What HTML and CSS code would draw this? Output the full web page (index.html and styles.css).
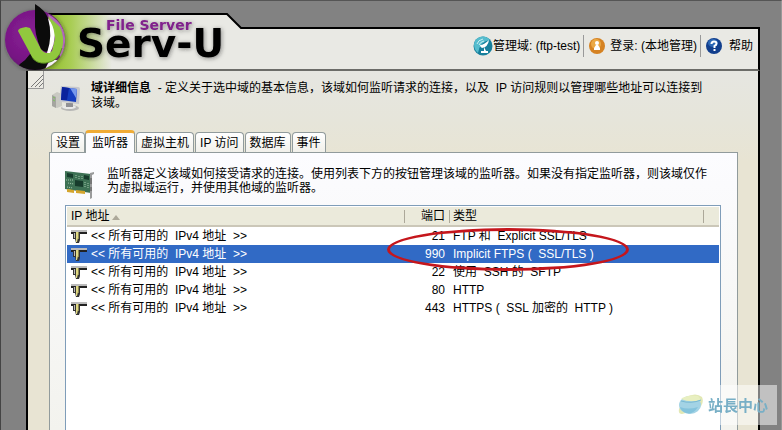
FILE: index.html
```html
<!DOCTYPE html>
<html lang="zh-CN">
<head>
    <meta charset="UTF-8">
    <meta name="viewport" content="width=device-width, initial-scale=1.0">
    <title>Serv-U File Server</title>
    <link rel="stylesheet" href="styles.css">
</head>
<body>
    <div class="page">
        <header class="header">
            <svg class="brand" width="242" height="69" viewBox="0 0 242 69" role="img" aria-label="Serv-U File Server">
                <defs>
                    <linearGradient id="bannerFill" x1="40" x2="108" y1="0" y2="0" gradientUnits="userSpaceOnUse">
                        <stop offset="0" stop-color="#8fbe22"/>
                        <stop offset="0.4" stop-color="#a9cd55"/>
                        <stop offset="1" stop-color="#e9e9e4"/>
                    </linearGradient>
                    <radialGradient id="ballFill" cx="0.4" cy="0.4" r="0.65">
                        <stop offset="0" stop-color="#8a1f96"/>
                        <stop offset="0.7" stop-color="#761683"/>
                        <stop offset="1" stop-color="#5a1066"/>
                    </radialGradient>
                    <filter id="soft" x="-10%" y="-10%" width="130%" height="140%">
                        <feDropShadow dx="1" dy="1" stdDeviation="2" flood-color="#222" flood-opacity="0.5"/>
                    </filter>
                    <clipPath id="ballClip"><circle cx="31" cy="38" r="30"/></clipPath>
                </defs>
                <path d="M23 12H223L237 26H242V69H23Z" fill="url(#bannerFill)"/>
                <path d="M40 12H223L237 26H242" fill="none" stroke="#000" stroke-width="2"/>
                <path d="M22 68H242" stroke="#6c6c68" stroke-width="2"/>
                <g filter="url(#soft)">
                    <circle cx="31" cy="38" r="30" fill="url(#ballFill)"/>
                    <path d="M44 12Q62 22 61 40Q60 50 56 55Z" fill="#b06bb8"/>
                    <g clip-path="url(#ballClip)">
                        <path d="M16 62Q22 58 26 52L44 60L40 70H10Z" fill="#0b0b0b"/>
                        <path d="M40 69L46 58L54 58L50 69Z" fill="#f4f4f4"/>
                    </g>
                </g>
                <path d="M44 14L56 25Q61 36 58 46Q55 59 42 61Q32 62 28 55L14 29Q14 26 22 25L26 26L37 47Q42 54 48 49L51 36Z" fill="#91c83e"/>
                <path d="M58 46Q55 59 42 61Q32 62 28 55" fill="none" stroke="#5d9220"/>
                <path d="M31 2Q41 8 44 16Q50 32 44 49Q41 51 37 47Q30 32 31 18Z" fill="#0b0b0b"/>
                <path d="M44 16Q56 32 46 51L43 51Q49 34 44 16Z" fill="#fff"/>
                <g filter="url(#soft)">
                    <text class="brand-sub" x="102" y="28">File Server</text>
                    <text class="brand-name" x="73" y="55">Serv-U</text>
                </g>
            </svg>
            <nav class="topnav">
                <a href="#domain" class="toplink">
                    <svg width="20" height="20" viewBox="0 0 20 20" aria-hidden="true">
                        <circle cx="10" cy="10" r="9.5" fill="#167f9c"/>
                        <path d="M1 8A9 9 0 0 1 17 4Q7 5 5 17Q1 14 1 8Z" fill="#55bccd"/>
                        <path d="M16 4Q15 11 9 12Q7 11 7 9Q11 9 16 4ZM11 11L13 15H15V17H8V15H11Z" fill="#fff"/>
                        <path d="M4 8Q5 4 10 3M6 9Q7 6 11 5" fill="none" stroke="#cceef3"/>
                    </svg>
                    <span>管理域: (ftp-test)</span>
                </a>
                <a href="#login" class="toplink">
                    <svg width="16" height="16" viewBox="0 0 16 16" aria-hidden="true">
                        <circle cx="8" cy="8" r="8" fill="#d58222"/>
                        <circle cx="7" cy="6" r="5" fill="#eba844"/>
                        <circle cx="8" cy="5" r="2" fill="#fff"/>
                        <path d="M5 12V10L7 7H9L11 10V12Z" fill="#fff"/>
                    </svg>
                    <span>登录: (本地管理)</span>
                </a>
                <a href="#help" class="toplink">
                    <svg width="16" height="16" viewBox="0 0 16 16" aria-hidden="true">
                        <circle cx="8" cy="8" r="8" fill="#123f8d"/>
                        <ellipse cx="7" cy="5" rx="5" ry="4" fill="#2c67b5"/>
                        <path d="M5.5 6Q5.500 3.500 8 3.500Q10.500 3.500 10.500 5.500Q10.500 7 8.500 8V10" fill="none" stroke="#fff" stroke-width="2"/>
                        <path d="M7.500 11H9.500V13H7.500Z" fill="#fff"/>
                    </svg>
                    <span>帮助</span>
                </a>
            </nav>
        </header>

        <main class="window">
            <svg class="grip" width="16" height="18" viewBox="0 0 16 18" aria-hidden="true">
                <path d="M0 0H16V18H0Z" fill="#ebeae3"/>
                <path d="M15.500 0V17.500H0" fill="none" stroke="#999"/>
                <path d="M3 16L15 4M7 16L15 8M11 16L15 12" stroke="#777"/>
            </svg>
            <section class="intro">
                <svg class="intro-icon" width="28" height="26" viewBox="0 0 28 26" aria-hidden="true">
                    <path d="M0 9L5 6L10 8V20L5 22L0 20Z" fill="#c9c9c2"/>
                    <path d="M0 9L4 11V22L0 20Z" fill="#a5a5a0"/>
                    <path d="M1 11L3 12M1 14L3 15" stroke="#7cc15c"/>
                    <ellipse cx="18" cy="22" rx="9" ry="3" fill="#b8b8b6"/>
                    <ellipse cx="17" cy="21" rx="7" ry="2" fill="#e9e9e8"/>
                    <path d="M14 17H21V21H14Z" fill="#909094"/>
                    <path d="M9 0L26 1Q28 1 28 3L27 18L9 16Q7 16 7 14Z" fill="#c6c7cc"/>
                    <path d="M10 1L25 3L24 16L9 14Z" fill="#153dbe"/>
                    <path d="M18 2L25 3L24 12Z" fill="#7698ed"/>
                    <path d="M10 1L17 2L15 14L9 14Z" fill="#0a229c"/>
                </svg>
                <p><strong>域详细信息</strong>&nbsp; - 定义关于选中域的基本信息，该域如何监听请求的连接，以及&nbsp; IP 访问规则以管理哪些地址可以连接到该域。</p>
            </section>
            <div class="tabs" role="tablist">
                <button class="tab" role="tab">设置</button>
                <button class="tab active" role="tab" aria-selected="true">监听器</button>
                <button class="tab" role="tab">虚拟主机</button>
                <button class="tab" role="tab">IP 访问</button>
                <button class="tab" role="tab">数据库</button>
                <button class="tab" role="tab">事件</button>
            </div>
            <section class="panel" role="tabpanel">
                <div class="note">
                    <svg class="note-icon" width="30" height="28" viewBox="0 0 30 28" aria-hidden="true">
                        <path d="M0 0L26 3V22L0 18Z" fill="#3d7154"/>
                        <path d="M2 2L8 3V7L2 6ZM10 9L18 10V16L10 15ZM19 4L24 5V9L19 8Z" fill="#173c2c"/>
                        <path d="M1 9H8M3 12L9 13M11 4V8M14 5V8M17 5V8M20 11V17M23 12V18M2 16L8 17" stroke="#a4c8ac" stroke-dasharray="1 1"/>
                        <path d="M2 18L9 19V22L2 21ZM11 19L20 20V23L11 22Z" fill="#d4a52c"/>
                        <path d="M25 2L29 1V3L27 4V27L25 28Z" fill="#9a9b9b"/>
                        <path d="M26 7V13M26 16V20" stroke="#555"/>
                    </svg>
                    <p>监听器定义该域如何接受请求的连接。使用列表下方的按钮管理该域的监听器。如果没有指定监听器，则该域仅作为虚拟域运行，并使用其他域的监听器。</p>
                </div>
                <svg width="0" height="0" class="symbols" aria-hidden="true">
                    <symbol id="listener" viewBox="0 0 16 14">
                        <path d="M0 0H16V2H0Z" fill="#bbb"/>
                        <path d="M0 2H16V4H0Z" fill="#222"/>
                        <path d="M2 3H9V10L8 13H5L4 9H2Z" fill="#333"/>
                        <path d="M3 3H4V8H3Z" fill="#bbb"/>
                        <path d="M5 2H7V8L6 12H5Z" fill="#e0d982"/>
                        <path d="M7 2H8V9H7Z" fill="#8c8650"/>
                    </symbol>
                </svg>
                <div class="list">
                    <table class="listeners">
                        <colgroup>
                            <col class="col-ip"><col class="col-port"><col class="col-type"><col class="col-end">
                        </colgroup>
                        <thead>
                            <tr><th>IP 地址<span class="sort"></span></th><th class="port">端口</th><th>类型</th><th></th></tr>
                        </thead>
                        <tbody>
                            <tr><td><svg class="row-icon"><use href="#listener"/></svg>&lt;&lt; 所有可用的&nbsp; IPv4 地址&nbsp; &gt;&gt;</td><td class="port">21</td><td colspan="2">FTP 和&nbsp; Explicit SSL/TLS</td></tr>
                            <tr class="selected"><td><svg class="row-icon"><use href="#listener"/></svg>&lt;&lt; 所有可用的&nbsp; IPv4 地址&nbsp; &gt;&gt;</td><td class="port">990</td><td colspan="2">Implicit FTPS ( &nbsp;SSL/TLS )</td></tr>
                            <tr><td><svg class="row-icon"><use href="#listener"/></svg>&lt;&lt; 所有可用的&nbsp; IPv4 地址&nbsp; &gt;&gt;</td><td class="port">22</td><td colspan="2">使用&nbsp; SSH 的&nbsp; SFTP</td></tr>
                            <tr><td><svg class="row-icon"><use href="#listener"/></svg>&lt;&lt; 所有可用的&nbsp; IPv4 地址&nbsp; &gt;&gt;</td><td class="port">80</td><td colspan="2">HTTP</td></tr>
                            <tr><td><svg class="row-icon"><use href="#listener"/></svg>&lt;&lt; 所有可用的&nbsp; IPv4 地址&nbsp; &gt;&gt;</td><td class="port">443</td><td colspan="2">HTTPS ( &nbsp;SSL 加密的&nbsp; HTTP )</td></tr>
                        </tbody>
                    </table>
                    <span class="circle"></span>
                </div>
            </section>
        </main>
    </div>
    <div class="watermark">
        <svg width="26" height="22" viewBox="0 0 26 22" aria-hidden="true">
            <path d="M8 3Q18 -2 24 3Q27 10 19 16L4 20Q0 20 1 15Z" fill="#e2e8b4"/>
            <ellipse cx="12" cy="11" rx="11" ry="9" fill="#a3d3e5"/>
            <path d="M3 5Q9 0 20 2L23 6Q12 9 3 5Z" fill="#e8efc0"/>
            <path d="M3 7Q13 10 23 6" fill="none" stroke="#79b9d2"/>
            <path d="M2 13Q10 16 20 13Q15 21 8 19Q3 17 2 13Z" fill="#84c3dc"/>
        </svg>
        <span>站長中心</span>
    </div>
</body>
</html>
```

FILE: styles.css
```css
* { margin: 0; padding: 0; box-sizing: border-box; }
body {
    background-color: #828282;
    color: #000;
    font: 12px/18px "Liberation Sans", "Noto Sans CJK SC", sans-serif;
}
.page {
    min-height: 100vh;
    display: flex;
    flex-direction: column;
    padding: 1px 21px 0 4px;
    border-top: 1px solid #555;
    border-left: 1px solid #444;
    border-right: 1px solid #999;
}
.header {
    display: flex;
    align-items: flex-end;
    position: relative;
    z-index: 1;
    margin-left: -1px;
}
.brand { display: block; flex: none; }
.brand-sub, .brand-name {
    font-family: "DejaVu Sans", sans-serif;
    font-weight: bold;
}
.brand-sub { font-size: 14px; fill: #80208c; }
.brand-name { font-size: 39px; fill: #000; }
.topnav {
    flex: 1;
    height: 44px;
    display: flex;
    justify-content: flex-end;
    padding: 6px 5px 0 0;
    background-color: #e9e9e4;
    border-top: 2px solid #000;
    border-right: 2px solid #000;
    border-bottom: 2px solid #6c6c68;
}
.toplink {
    display: flex;
    align-items: center;
    height: 22px;
    gap: 5px;
    padding: 0 3px 0 5px;
    color: #000;
    text-decoration: none;
    white-space: nowrap;
}
.toplink:first-child { gap: 0; }
.toplink + .toplink { border-left: 1px solid #999; }
.toplink:last-child { gap: 7px; padding-right: 0; }
.window {
    flex: 1;
    display: flex;
    flex-direction: column;
    margin-left: 21px;
    padding-right: 20px;
    border-left: 2px solid #000;
    border-right: 2px solid #000;
    background: linear-gradient(#e6e6e1, #e6e5da 50px, #e8e4d3 90px);
}
.grip { display: block; }
.intro {
    display: flex;
    gap: 11px;
    margin-top: -8px;
    padding: 0 30px 0 24px;
    line-height: 15px;
}
.intro-icon { flex: none; margin-top: 5px; }
.tabs {
    display: flex;
    align-items: flex-end;
    gap: 1px;
    height: 22px;
    margin: 18px 0 0 23px;
}
.tab {
    height: 20px;
    padding: 0 4px;
    font: inherit;
    line-height: 16px;
    background: linear-gradient(#fff, #f1f0ea);
    border: 1px solid #919b9c;
    border-bottom: none;
    border-radius: 4px 4px 0 0;
    white-space: nowrap;
}
.tab.active {
    height: 23px;
    padding: 0 6px;
    margin: 0 0 -1px -1px;
    background: #fcfcfe;
    border-top: 3px solid #f0ac35;
    z-index: 1;
}
.panel {
    flex: 1;
    display: flex;
    flex-direction: column;
    margin-left: 21px;
    padding: 14px 16px 0 15px;
    border: 1px solid #919b9c;
    border-bottom: none;
    background: linear-gradient(#fcfcff, #f3f3ee);
}
.note {
    display: flex;
    gap: 12px;
    padding-right: 10px;
    line-height: 14px;
}
.note-icon { flex: none; margin-top: 4px; }
.symbols { position: absolute; }
.list {
    flex: 1;
    position: relative;
    margin-top: 6px;
    padding: 1px;
    background-color: #fff;
    border: 1px solid #7f9db9;
    border-bottom: none;
}
.listeners {
    width: 100%;
    table-layout: fixed;
    border-spacing: 0;
    white-space: nowrap;
}
.col-port { width: 45px; }
.col-type { width: 254px; }
.col-end { width: 16px; }
.listeners th {
    height: 20px;
    padding: 0 4px;
    font-weight: normal;
    line-height: 16px;
    text-align: left;
    background: linear-gradient(to right, #aca899, #aca899) 0 3px / 1px 13px no-repeat #ebeadb;
    border-bottom: 2px solid #cbc7b8;
}
.listeners th:first-child { background-image: none; }
.listeners td { height: 18px; padding: 0 4px; }
.listeners .port { text-align: right; }
.sort {
    display: inline-block;
    margin-left: 3px;
    border: 4px solid transparent;
    border-top: none;
    border-bottom: 5px solid #aca899;
}
.row-icon {
    width: 16px;
    height: 14px;
    margin-right: 4px;
    vertical-align: middle;
}
.selected { background-color: #316ac5; color: #fff; }
/* red marker over the port and type columns */
.circle {
    position: absolute;
    top: 22px;
    right: 91px;
    width: 242px;
    height: 43px;
    border: 3px solid #c5161c;
    border-radius: 50%;
}
.watermark {
    position: fixed;
    right: 5px;
    bottom: 5px;
    z-index: 2;
    display: flex;
    align-items: center;
    gap: 4px;
    height: 40px;
    padding: 0 9px 0 12px;
    background-color: rgba(255, 255, 255, 0.5);
    color: #78afc6;
    font: bold 15px/20px "Noto Sans CJK TC", sans-serif;
}
```
